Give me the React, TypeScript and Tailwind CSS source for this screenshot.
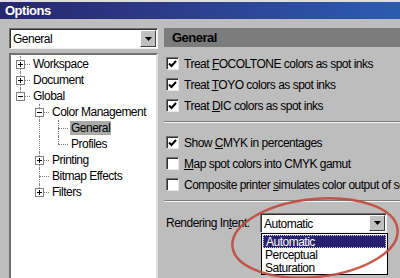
import React from "react";

type Guide = "none" | "line" | "tee" | "end";

interface TreeRow {
  label: string;
  guides: Guide[];
  box?: "plus" | "minus";
  selected?: boolean;
}

const rows: TreeRow[] = [
  { label: "Workspace", guides: ["tee"], box: "plus" },
  { label: "Document", guides: ["tee"], box: "plus" },
  { label: "Global", guides: ["end"], box: "minus" },
  { label: "Color Management", guides: ["none", "tee"], box: "minus" },
  { label: "General", guides: ["none", "line", "tee"], selected: true },
  { label: "Profiles", guides: ["none", "line", "end"] },
  { label: "Printing", guides: ["none", "tee"], box: "plus" },
  { label: "Bitmap Effects", guides: ["none", "tee"] },
  { label: "Filters", guides: ["none", "end"], box: "plus" },
];

function GuideCell({ kind, box }: { kind: Guide; box?: "plus" | "minus" }) {
  return (
    <div className="relative w-[19px] h-full shrink-0">
      {kind !== "none" && (
        <div
          className={
            "absolute left-[9px] top-0 border-l border-dotted border-[#808080] " +
            (kind === "end" ? "h-1/2" : "h-full")
          }
        />
      )}
      {(kind === "tee" || kind === "end") && (
        <div className="absolute left-[9px] top-1/2 w-[10px] border-t border-dotted border-[#808080]" />
      )}
      {box && (
        <div className="absolute left-[5px] top-[4px] w-[9px] h-[9px] bg-white border border-[#808080] flex items-center justify-center">
          <div className="relative w-[5px] h-[5px]">
            <div className="absolute left-0 top-[2px] w-[5px] h-[1px] bg-black" />
            {box === "plus" && <div className="absolute left-[2px] top-0 w-[1px] h-[5px] bg-black" />}
          </div>
        </div>
      )}
    </div>
  );
}

function DropButton() {
  return (
    <div className="w-[16px] h-full bg-[#c0c0c0] border border-t-white border-l-white border-b-[#404040] border-r-[#404040] flex items-center justify-center">
      <svg width="7" height="4" viewBox="0 0 7 4">
        <polygon points="0,0 7,0 3.5,4" fill="#000" />
      </svg>
    </div>
  );
}

function CheckBox({ checked }: { checked?: boolean }) {
  return (
    <div className="w-[13px] h-[13px] shrink-0 bg-white border border-t-[#707070] border-l-[#707070] border-b-[#e8e8e8] border-r-[#e8e8e8] shadow-[inset_1px_1px_0_#303030] flex items-center justify-center">
      {checked && (
        <svg width="9" height="8" viewBox="0 0 9 8">
          <polyline points="1,3.5 3.5,6 8,1" fill="none" stroke="#000" strokeWidth="2" />
        </svg>
      )}
    </div>
  );
}

function Separator() {
  return (
    <div className="flex flex-col">
      <div className="h-[1px] bg-[#7c7c7c]" />
      <div className="h-[1px] bg-[#f4f4f4]" />
    </div>
  );
}

function CheckRow({ checked, children }: { checked?: boolean; children: React.ReactNode }) {
  return (
    <div className="h-[21px] flex items-center gap-[5px] pl-[2px] whitespace-nowrap">
      <CheckBox checked={checked} />
      <span>{children}</span>
    </div>
  );
}

export default function App() {
  return (
    <div className="w-[400px] h-[278px] overflow-hidden relative bg-[#bdbdbd] text-black text-[12px] tracking-[-0.5px] leading-none font-['Liberation_Sans',Arial,sans-serif]">
      <div className="h-[2px] bg-[#dedede]" />
      <div className="h-[17px] bg-gradient-to-r from-[#28256e] to-[#2b5cb2] flex items-center pl-[5px] text-white font-bold text-[13px]">
        Options
      </div>

      <div className="flex pt-[9px] pl-[9px] gap-[6px]">
        {/* Left: category select + tree */}
        <div className="w-[149px] flex flex-col gap-[4px] shrink-0">
          <div className="h-[21px] bg-white border border-t-[#707070] border-l-[#707070] border-b-[#f0f0f0] border-r-[#f0f0f0] shadow-[inset_1px_1px_0_#303030] flex items-center pl-[3px] pr-[1px] py-[1px]">
            <span className="flex-1 pt-[1px]">General</span>
            <DropButton />
          </div>
          <div className="h-[240px] bg-white border-2 border-t-[#707070] border-l-[#707070] border-b-[#e0e0e0] border-r-[#e0e0e0] pt-[1px]">
            {rows.map((r) => (
              <div key={r.label} className="h-[16px] flex items-center">
                {r.guides.map((g, i) => (
                  <GuideCell key={i} kind={g} box={i === r.guides.length - 1 ? r.box : undefined} />
                ))}
                <span
                  className={
                    "ml-[2px] px-[1px] py-[1px] whitespace-nowrap " +
                    (r.selected ? "bg-[#a9a9a9]" : "")
                  }
                >
                  {r.label}
                </span>
              </div>
            ))}
          </div>
        </div>

        {/* Right: settings page */}
        <div className="flex-1 min-w-0 overflow-hidden">
          <div className="h-[19px] bg-[#7c7c7c] flex items-center pl-[8px] font-bold text-[13px]">General</div>
          <div className="pt-[6px]">
            <CheckRow checked>
              Treat <span className="underline">F</span>OCOLTONE colors as spot inks
            </CheckRow>
            <CheckRow checked>
              Treat <span className="underline">T</span>OYO colors as spot inks
            </CheckRow>
            <CheckRow checked>
              Treat <span className="underline">D</span>IC colors as spot inks
            </CheckRow>
          </div>
          <div className="pt-[5px] pb-[9px]">
            <Separator />
          </div>
          <CheckRow checked>
            Show <span className="underline">C</span>MYK in percentages
          </CheckRow>
          <CheckRow>
            <span className="underline">M</span>ap spot colors into CMYK gamut
          </CheckRow>
          <CheckRow>
            Composite printer <span className="underline">s</span>imulates color output of separations
          </CheckRow>
          <div className="pt-[5px] pb-[11px]">
            <Separator />
          </div>
          <div className="flex items-center">
            <span className="w-[96px] pl-[2px] whitespace-nowrap">
              Rendering In<span className="underline">t</span>ent:
            </span>
            <div className="relative">
              <div className="w-[127px] h-[20px] bg-white border border-t-[#707070] border-l-[#707070] border-b-[#f0f0f0] border-r-[#f0f0f0] shadow-[inset_1px_1px_0_#303030] flex items-center pl-[3px] pr-[1px] py-[1px]">
                <span className="flex-1 pt-[1px]">Automatic</span>
                <DropButton />
              </div>
              <div className="absolute left-[1px] top-[20px] w-[127px] bg-white border border-black flex flex-col">
                <div className="h-[13px] mx-[1px] mt-[1px] bg-[#27206e] text-white border border-dotted border-[#c8c8ff] flex items-center pl-[2px]">
                  Automatic
                </div>
                <div className="h-[13px] flex items-center pl-[3px]">Perceptual</div>
                <div className="h-[13px] flex items-center pl-[3px]">Saturation</div>
              </div>
            </div>
          </div>
        </div>
      </div>

      <svg className="absolute inset-0 pointer-events-none" width="400" height="278" viewBox="0 0 400 278">
        <ellipse
          cx="315"
          cy="238"
          rx="83"
          ry="39"
          transform="rotate(-6 315 238)"
          fill="none"
          stroke="#c2473b"
          strokeWidth="2.5"
          opacity="0.9"
        />
      </svg>
    </div>
  );
}
